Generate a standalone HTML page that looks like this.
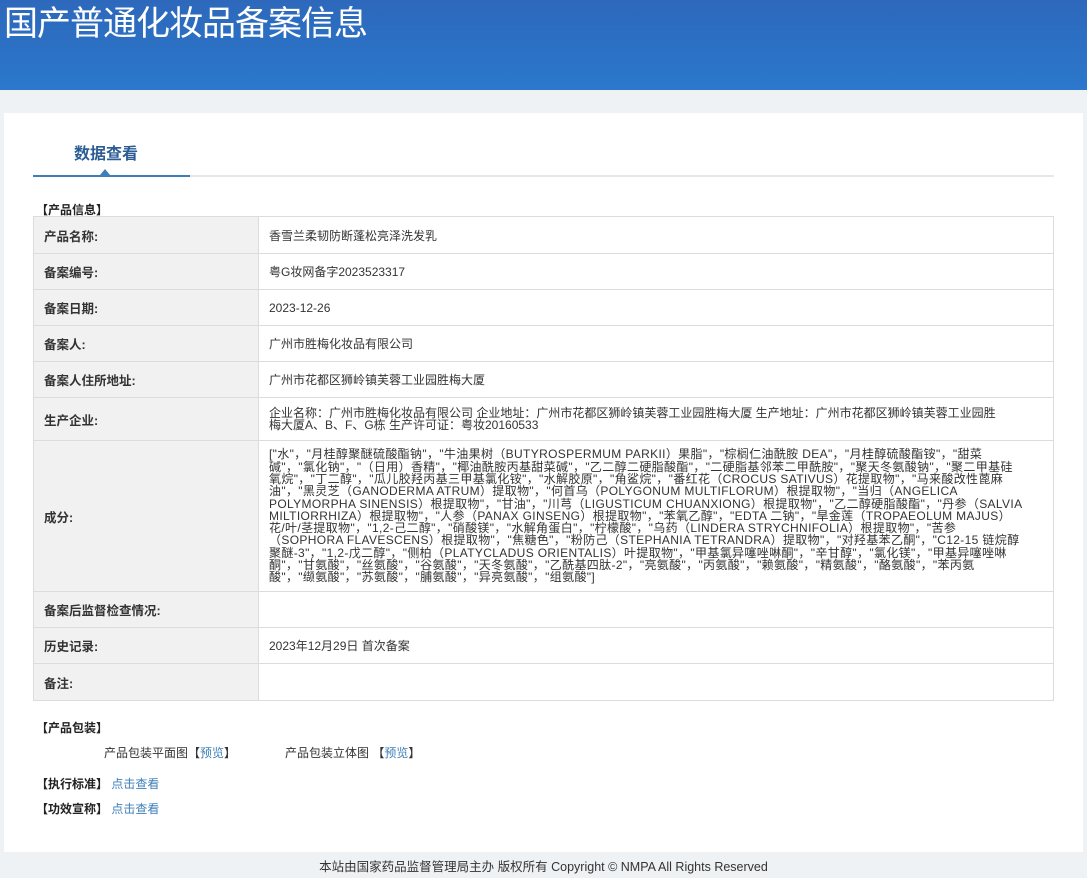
<!DOCTYPE html>
<html><head><meta charset="utf-8"><style>
*{margin:0;padding:0;box-sizing:border-box}
body{width:1087px;height:878px;background:#eef2f5;font-family:"Liberation Sans","Noto Sans CJK SC",sans-serif;color:#333;overflow:hidden;position:relative}
.hd{position:absolute;left:0;top:0;width:1087px;height:90px;background:linear-gradient(180deg,#2d68bb 0%,#2b78cc 100%)}
.hd h1{position:absolute;left:4px;top:2px;font-size:34px;font-weight:normal;color:#fff;letter-spacing:-1px;line-height:44px}
.panel{position:absolute;left:4px;top:113px;width:1079px;height:739px;background:#fff}
.tab{position:absolute;left:74px;top:140px;font-size:16px;font-weight:bold;color:#2b5d94}
.line{position:absolute;left:33px;top:175px;width:1021px;height:2px;background:#e5e8ea}
.line2{position:absolute;left:33px;top:175px;width:157px;height:2px;background:#3d7fb8}
.tri{position:absolute;left:100px;top:169px;width:0;height:0;border-left:5px solid transparent;border-right:5px solid transparent;border-bottom:6px solid #3d7fb8}
.sec{position:absolute;left:36px;font-size:12px;font-weight:bold;color:#222}
table{position:absolute;left:33px;top:216px;width:1021px;border-collapse:collapse;border:1px solid #a8c0d6;font-size:12px}
td{border:1px solid #dcdcdc;padding:0 10px;vertical-align:middle}
td.l{width:225px;background:#f1f1f1;font-weight:bold;color:#333;font-size:12.5px}
td.v{color:#333}
.ing{font-size:12px;line-height:12.3px;white-space:nowrap;letter-spacing:0.35px}
a{color:#3d7fb8;text-decoration:none}
.t{position:absolute;font-size:12px;color:#333}
.foot{position:absolute;top:856px;left:0;width:1087px;text-align:center;font-size:12.5px;color:#333}
</style></head><body>
<div class="hd"><h1>国产普通化妆品备案信息</h1></div>
<div class="panel"></div>
<div class="tab">数据查看</div>
<div class="line"></div><div class="line2"></div><div class="tri"></div>
<div class="sec" style="top:201px">【产品信息】</div>
<table>
<tr style="height:37px"><td class="l">产品名称:</td><td class="v">香雪兰柔韧防断蓬松亮泽洗发乳</td></tr>
<tr style="height:36px"><td class="l">备案编号:</td><td class="v">粤G妆网备字2023523317</td></tr>
<tr style="height:36px"><td class="l">备案日期:</td><td class="v">2023-12-26</td></tr>
<tr style="height:36px"><td class="l">备案人:</td><td class="v">广州市胜梅化妆品有限公司</td></tr>
<tr style="height:36px"><td class="l">备案人住所地址:</td><td class="v">广州市花都区狮岭镇芙蓉工业园胜梅大厦</td></tr>
<tr style="height:43px"><td class="l">生产企业:</td><td class="v" style="line-height:12.5px">企业名称：广州市胜梅化妆品有限公司 企业地址：广州市花都区狮岭镇芙蓉工业园胜梅大厦 生产地址：广州市花都区狮岭镇芙蓉工业园胜<br>梅大厦A、B、F、G栋 生产许可证：粤妆20160533</td></tr>
<tr style="height:151px"><td class="l">成分:</td><td class="v ing">["水"，"月桂醇聚醚硫酸酯钠"，"牛油果树（BUTYROSPERMUM PARKII）果脂"，"棕榈仁油酰胺 DEA"，"月桂醇硫酸酯铵"，"甜菜<br>碱"，"氯化钠"，"（日用）香精"，"椰油酰胺丙基甜菜碱"，"乙二醇二硬脂酸酯"，"二硬脂基邻苯二甲酰胺"，"聚天冬氨酸钠"，"聚二甲基硅<br>氧烷"，"丁二醇"，"瓜儿胶羟丙基三甲基氯化铵"，"水解胶原"，"角鲨烷"，"番红花（CROCUS SATIVUS）花提取物"，"马来酸改性蓖麻<br>油"，"黑灵芝（GANODERMA ATRUM）提取物"，"何首乌（POLYGONUM MULTIFLORUM）根提取物"，"当归（ANGELICA<br>POLYMORPHA SINENSIS）根提取物"，"甘油"，"川芎（LIGUSTICUM CHUANXIONG）根提取物"，"乙二醇硬脂酸酯"，"丹参（SALVIA<br>MILTIORRHIZA）根提取物"，"人参（PANAX GINSENG）根提取物"，"苯氧乙醇"，"EDTA 二钠"，"旱金莲（TROPAEOLUM MAJUS）<br>花/叶/茎提取物"，"1,2-己二醇"，"硝酸镁"，"水解角蛋白"，"柠檬酸"，"乌药（LINDERA STRYCHNIFOLIA）根提取物"，"苦参<br>（SOPHORA FLAVESCENS）根提取物"，"焦糖色"，"粉防己（STEPHANIA TETRANDRA）提取物"，"对羟基苯乙酮"，"C12-15 链烷醇<br>聚醚-3"，"1,2-戊二醇"，"侧柏（PLATYCLADUS ORIENTALIS）叶提取物"，"甲基氯异噻唑啉酮"，"辛甘醇"，"氯化镁"，"甲基异噻唑啉<br>酮"，"甘氨酸"，"丝氨酸"，"谷氨酸"，"天冬氨酸"，"乙酰基四肽-2"，"亮氨酸"，"丙氨酸"，"赖氨酸"，"精氨酸"，"酪氨酸"，"苯丙氨<br>酸"，"缬氨酸"，"苏氨酸"，"脯氨酸"，"异亮氨酸"，"组氨酸"]</td></tr>
<tr style="height:36px"><td class="l">备案后监督检查情况:</td><td class="v"></td></tr>
<tr style="height:36px"><td class="l">历史记录:</td><td class="v">2023年12月29日 首次备案</td></tr>
<tr style="height:37px"><td class="l">备注:</td><td class="v"></td></tr>
</table>
<div class="sec" style="top:719px">【产品包装】</div>
<div class="t" style="left:104px;top:744px">产品包装平面图【<a>预览</a>】</div>
<div class="t" style="left:285px;top:744px">产品包装立体图 【<a>预览</a>】</div>
<div class="sec" style="top:775px">【执行标准】 <a style="font-weight:normal">点击查看</a></div>
<div class="sec" style="top:800px">【功效宣称】 <a style="font-weight:normal">点击查看</a></div>
<div class="foot">本站由国家药品监督管理局主办 版权所有 Copyright © NMPA All Rights Reserved</div>
</body></html>
